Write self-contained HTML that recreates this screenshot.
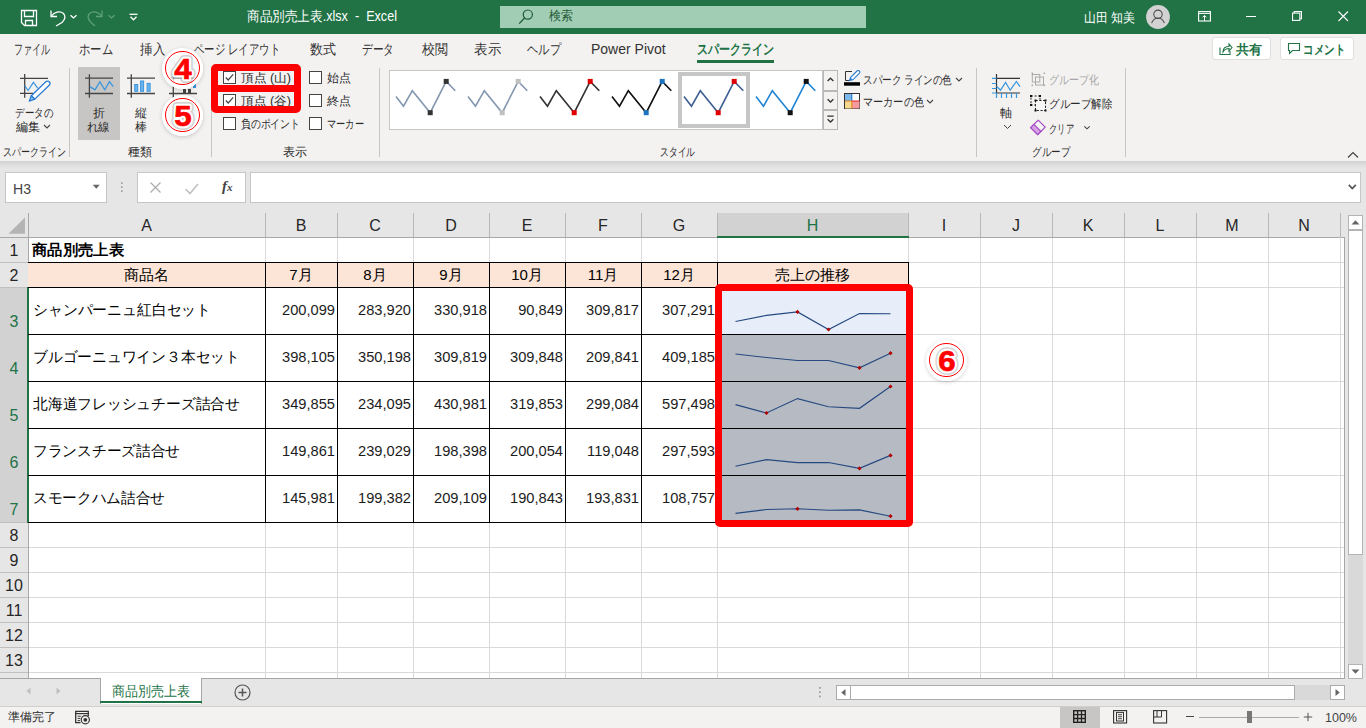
<!DOCTYPE html>
<html><head><meta charset="utf-8">
<style>
html,body{margin:0;padding:0;}
body{width:1366px;height:728px;overflow:hidden;position:relative;background:#e6e6e6;font-family:"Liberation Sans", sans-serif;}
.t{position:absolute;white-space:pre;}
</style></head><body>
<div style="position:absolute;left:0px;top:0px;width:1366px;height:34px;background:#217346"></div>
<svg style="position:absolute;left:20px;top:9px;" width="20" height="20" viewBox="0 0 20 20"><path d="M1.5 1.5H16.5V16.5H4.5L1.5 13.5Z" fill="none" stroke="#fff" stroke-width="1.3"/>
<path d="M4.5 1.5V7.5H13.5V1.5" fill="none" stroke="#fff" stroke-width="1.3"/>
<path d="M5.5 16.5V11.5H12.5V16.5" fill="none" stroke="#fff" stroke-width="1.3"/></svg>
<svg style="position:absolute;left:48px;top:9px;" width="32" height="20" viewBox="0 0 32 20"><path d="M3 1.5V7.5H9" fill="none" stroke="#fff" stroke-width="1.3"/>
<path d="M3.5 7C6 3 12 1.5 15.5 4.5C18.5 8 16.5 11 14 13.5L8 17" fill="none" stroke="#fff" stroke-width="1.3"/>
<path d="M22.5 6.3L25.5 9L28.5 6.3" fill="none" stroke="#fff" stroke-width="1.3"/></svg>
<svg style="position:absolute;left:87px;top:9px;" width="32" height="20" viewBox="0 0 32 20"><path d="M15 1.5V7.5H9" fill="none" stroke="#5f9e7b" stroke-width="1.3"/>
<path d="M14.5 7C12 3 6 1.5 2.5 4.5C-0.5 8 1.5 11 4 13.5L8 17" fill="none" stroke="#5f9e7b" stroke-width="1.3"/>
<path d="M21.5 6.3L24.5 9L27.5 6.3" fill="none" stroke="#5f9e7b" stroke-width="1.3"/></svg>
<svg style="position:absolute;left:128px;top:12px;" width="12" height="12" viewBox="0 0 12 12"><path d="M1.5 2.3H9.5" stroke="#fff" stroke-width="1.3"/><path d="M2.5 4.8L5.5 7.8L8.5 4.8" fill="none" stroke="#fff" stroke-width="1.3"/></svg>
<div class="t" style="left:247px;transform-origin:0 50%;top:7.00px;font-size:14px;line-height:18px;color:#ffffff;font-weight:normal;transform:scaleX(0.9011);">商品別売上表.xlsx  -  Excel</div>
<div style="position:absolute;left:500px;top:6px;width:366px;height:22px;background:#a0cdb3"></div>
<svg style="position:absolute;left:516px;top:9px;" width="20" height="18" viewBox="0 0 20 18"><circle cx="11.8" cy="5.6" r="4.6" fill="none" stroke="#1f5a37" stroke-width="1.2"/><path d="M8.6 9L3.2 14.6" stroke="#1f5a37" stroke-width="1.3"/></svg>
<div class="t" style="left:549px;transform-origin:0 50%;top:7.30px;font-size:13px;line-height:17px;color:#1f5a37;font-weight:normal;transform:scaleX(0.9231);">検索</div>
<div class="t" style="left:1084px;transform-origin:0 50%;top:8.50px;font-size:13px;line-height:17px;color:#ffffff;font-weight:normal;transform:scaleX(0.9169);">山田 知美</div>
<svg style="position:absolute;left:1146px;top:5px;" width="24" height="24" viewBox="0 0 24 24"><circle cx="12" cy="12" r="11.9" fill="#d2d2d2"/><circle cx="12" cy="9.3" r="4.2" fill="none" stroke="#4a4a4a" stroke-width="1.05"/><path d="M5.6 18.2C7 14.2 9.5 12.9 12 12.9S17 14.2 18.4 18.2" fill="none" stroke="#4a4a4a" stroke-width="1.05"/></svg>
<svg style="position:absolute;left:1198px;top:11px;" width="14" height="11" viewBox="0 0 14 11"><rect x="0.6" y="0.6" width="11.8" height="9.4" fill="none" stroke="#fff" stroke-width="1.1"/><path d="M0.6 2.4H12.4" stroke="#fff" stroke-width="1"/><path d="M6.5 10V4.4M4.6 6.3L6.5 4.4L8.4 6.3" fill="none" stroke="#fff" stroke-width="1"/></svg>
<div style="position:absolute;left:1246px;top:16px;width:10px;height:1px;background:#fff"></div>
<svg style="position:absolute;left:1292px;top:11px;" width="11" height="11" viewBox="0 0 11 11"><rect x="0.55" y="2.1" width="7.3" height="7.3" fill="none" stroke="#fff" stroke-width="1.1"/><path d="M2.2 2.1V0.55H9.45V7.8H7.85" fill="none" stroke="#fff" stroke-width="1.1"/></svg>
<svg style="position:absolute;left:1338px;top:11px;" width="11" height="11" viewBox="0 0 11 11"><path d="M0.5 0.5L10 10M10 0.5L0.5 10" stroke="#fff" stroke-width="1.1"/></svg>
<div style="position:absolute;left:0px;top:34px;width:1366px;height:127px;background:#f3f2f1"></div>
<div style="position:absolute;left:0px;top:161px;width:1366px;height:7px;background:linear-gradient(#d2d2d2,#e6e6e6)"></div>
<div class="t" style="left:14px;transform-origin:0 50%;top:40.00px;font-size:14px;line-height:18px;color:#333333;font-weight:normal;transform:scaleX(0.6429);">ファイル</div>
<div class="t" style="left:79px;transform-origin:0 50%;top:40.00px;font-size:14px;line-height:18px;color:#333333;font-weight:normal;transform:scaleX(0.8095);">ホーム</div>
<div class="t" style="left:140px;transform-origin:0 50%;top:40.00px;font-size:14px;line-height:18px;color:#333333;font-weight:normal;transform:scaleX(0.8929);">挿入</div>
<div class="t" style="left:194px;transform-origin:0 50%;top:40.00px;font-size:14px;line-height:18px;color:#333333;font-weight:normal;transform:scaleX(0.7421);">ページ レイアウト</div>
<div class="t" style="left:310px;transform-origin:0 50%;top:40.00px;font-size:14px;line-height:18px;color:#333333;font-weight:normal;transform:scaleX(0.9286);">数式</div>
<div class="t" style="left:362px;transform-origin:0 50%;top:40.00px;font-size:14px;line-height:18px;color:#333333;font-weight:normal;transform:scaleX(0.7619);">データ</div>
<div class="t" style="left:422px;transform-origin:0 50%;top:40.00px;font-size:14px;line-height:18px;color:#333333;font-weight:normal;transform:scaleX(0.9286);">校閲</div>
<div class="t" style="left:474px;transform-origin:0 50%;top:40.00px;font-size:14px;line-height:18px;color:#333333;font-weight:normal;transform:scaleX(0.9643);">表示</div>
<div class="t" style="left:527px;transform-origin:0 50%;top:40.00px;font-size:14px;line-height:18px;color:#333333;font-weight:normal;transform:scaleX(0.8095);">ヘルプ</div>
<div class="t" style="left:591px;transform-origin:0 50%;top:40.00px;font-size:14px;line-height:18px;color:#333333;font-weight:normal;">Power Pivot</div>
<div class="t" style="left:697px;transform-origin:0 50%;top:40.00px;font-size:14px;line-height:18px;color:#217346;font-weight:bold;transform:scaleX(0.7857);">スパークライン</div>
<div style="position:absolute;left:697px;top:60px;width:77px;height:3px;background:#217346"></div>
<div style="position:absolute;left:1212px;top:37px;width:59px;height:23px;background:#fff;border:1px solid #e1dfdd;box-sizing:border-box;border-radius:3px"></div>
<svg style="position:absolute;left:1219px;top:42px;" width="14" height="14" viewBox="0 0 14 14"><path d="M1 5.5V12.5H11V9" fill="none" stroke="#217346" stroke-width="1.1"/><path d="M4 10C4 6 6.5 4.5 10 4.5V2L13 5.5L10 9V6.5C7 6.5 5.5 7.5 4 10Z" fill="none" stroke="#217346" stroke-width="1.1"/></svg>
<div class="t" style="left:1236px;transform-origin:0 50%;top:40.50px;font-size:13px;line-height:17px;color:#217346;font-weight:bold;">共有</div>
<div style="position:absolute;left:1280px;top:37px;width:74px;height:23px;background:#fff;border:1px solid #e1dfdd;box-sizing:border-box;border-radius:3px"></div>
<svg style="position:absolute;left:1287px;top:42px;" width="14" height="14" viewBox="0 0 14 14"><path d="M1.5 1.5H12.5V8.5H5.5L2.5 11.5V8.5H1.5Z" fill="none" stroke="#217346" stroke-width="1.1"/></svg>
<div class="t" style="left:1303px;transform-origin:0 50%;top:40.50px;font-size:13px;line-height:17px;color:#217346;font-weight:bold;transform:scaleX(0.8077);">コメント</div>
<div style="position:absolute;left:69px;top:68px;width:1px;height:89px;background:#c8c6c4"></div>
<div style="position:absolute;left:211px;top:68px;width:1px;height:89px;background:#c8c6c4"></div>
<div style="position:absolute;left:379px;top:68px;width:1px;height:89px;background:#c8c6c4"></div>
<div style="position:absolute;left:976px;top:68px;width:1px;height:89px;background:#c8c6c4"></div>
<div style="position:absolute;left:1125px;top:68px;width:1px;height:89px;background:#c8c6c4"></div>
<div class="t" style="left:3px;transform-origin:0 50%;top:144.00px;font-size:12px;line-height:16px;color:#2b2b2b;font-weight:normal;transform:scaleX(0.7500);">スパークライン</div>
<div class="t" style="left:128px;transform-origin:0 50%;top:144.00px;font-size:12px;line-height:16px;color:#2b2b2b;font-weight:normal;">種類</div>
<div class="t" style="left:283px;transform-origin:0 50%;top:144.00px;font-size:12px;line-height:16px;color:#2b2b2b;font-weight:normal;">表示</div>
<div class="t" style="left:660px;transform-origin:0 50%;top:144.00px;font-size:12px;line-height:16px;color:#2b2b2b;font-weight:normal;transform:scaleX(0.7292);">スタイル</div>
<div class="t" style="left:1032px;transform-origin:0 50%;top:144.00px;font-size:12px;line-height:16px;color:#2b2b2b;font-weight:normal;transform:scaleX(0.7917);">グループ</div>
<svg style="position:absolute;left:1346px;top:150px;" width="14" height="10" viewBox="0 0 14 10"><path d="M2 7.5L7 2.5L12 7.5" fill="none" stroke="#444" stroke-width="1.2"/></svg>
<svg style="position:absolute;left:18px;top:72px;" width="34" height="32" viewBox="0 0 34 32"><path d="M2 6.3H30M2 21.4H15M6.7 2.1V25.7" stroke="#444" stroke-width="1.3" fill="none"/>
<path d="M6.7 13.7L10.1 18.5L15.4 10.3L19.7 16.1" stroke="#3a96dd" stroke-width="1.2" fill="none"/>
<path d="M13.3 23.8L27.8 9.8A2.4 2.4 0 0 1 31.2 13.2L16.7 27.2Z" fill="#fff" stroke="#2b7cd3" stroke-width="1.3"/>
<path d="M13.3 23.8L11.3 29.2L16.7 27.2Z" fill="#9cc9f0" stroke="#2b7cd3" stroke-width="1.3" stroke-linejoin="round"/></svg>
<div class="t" style="left:15px;transform-origin:0 50%;top:105.00px;font-size:12px;line-height:16px;color:#2b2b2b;font-weight:normal;transform:scaleX(0.7917);">データの</div>
<div class="t" style="left:16px;transform-origin:0 50%;top:119.00px;font-size:12px;line-height:16px;color:#2b2b2b;font-weight:normal;">編集</div>
<svg style="position:absolute;left:43px;top:124px;" width="8" height="6" viewBox="0 0 8 6"><path d="M1 1L4 4L7 1" fill="none" stroke="#444" stroke-width="1.1"/></svg>
<div style="position:absolute;left:78px;top:67px;width:42px;height:73px;background:#c8c6c4"></div>
<svg style="position:absolute;left:83px;top:72px;" width="34" height="28" viewBox="0 0 34 28"><path d="M2 6.2H30M2 21.5H30M6.4 2.2V25.8" stroke="#444" stroke-width="1.3" fill="none"/>
<path d="M6.9 14.6L12 17.8L16.9 9.7L21.7 17.8L26.5 9.7L30.2 14.6" stroke="#3a96dd" stroke-width="1.3" fill="none"/></svg>
<div class="t" style="left:93px;transform-origin:0 50%;top:105.00px;font-size:12px;line-height:16px;color:#2b2b2b;font-weight:normal;">折</div>
<div class="t" style="left:87px;transform-origin:0 50%;top:119.00px;font-size:12px;line-height:16px;color:#2b2b2b;font-weight:normal;transform:scaleX(0.9583);">れ線</div>
<svg style="position:absolute;left:125px;top:72px;" width="34" height="28" viewBox="0 0 34 28"><path d="M2 6.2H30M2 21.5H30M6.3 2.2V25.8" stroke="#444" stroke-width="1.3" fill="none"/>
<rect x="9.7" y="12.5" width="3" height="6.8" fill="#6cb4ec" stroke="#3a96dd" stroke-width="1"/>
<rect x="15.6" y="9" width="3" height="10.3" fill="#6cb4ec" stroke="#3a96dd" stroke-width="1"/>
<rect x="22.1" y="11.4" width="3" height="7.9" fill="#6cb4ec" stroke="#3a96dd" stroke-width="1"/></svg>
<div class="t" style="left:135px;transform-origin:0 50%;top:105.00px;font-size:12px;line-height:16px;color:#2b2b2b;font-weight:normal;">縦</div>
<div class="t" style="left:135px;transform-origin:0 50%;top:119.00px;font-size:12px;line-height:16px;color:#2b2b2b;font-weight:normal;">棒</div>
<svg style="position:absolute;left:167px;top:72px;" width="34" height="28" viewBox="0 0 34 28"><path d="M2 6.2H30M2 21.5H30M6.3 2.2V25.8" stroke="#444" stroke-width="1.3" fill="none"/>
<rect x="16" y="17" width="3" height="4" fill="#444"/><rect x="21" y="17" width="3" height="4" fill="#444"/><rect x="26" y="11" width="3" height="5" fill="#3a96dd"/></svg>
<svg style="position:absolute;left:223px;top:71px;" width="13" height="13" viewBox="0 0 13 13"><rect x="0.5" y="0.5" width="12" height="12" fill="#fff" stroke="#444" stroke-width="1"/><path d="M2.8 6.5L5.2 9L10.2 3.3" fill="none" stroke="#444" stroke-width="1.2"/></svg>
<svg style="position:absolute;left:223px;top:94px;" width="13" height="13" viewBox="0 0 13 13"><rect x="0.5" y="0.5" width="12" height="12" fill="#fff" stroke="#444" stroke-width="1"/><path d="M2.8 6.5L5.2 9L10.2 3.3" fill="none" stroke="#444" stroke-width="1.2"/></svg>
<svg style="position:absolute;left:223px;top:117px;" width="13" height="13" viewBox="0 0 13 13"><rect x="0.5" y="0.5" width="12" height="12" fill="#fff" stroke="#444" stroke-width="1"/></svg>
<svg style="position:absolute;left:309px;top:71px;" width="13" height="13" viewBox="0 0 13 13"><rect x="0.5" y="0.5" width="12" height="12" fill="#fff" stroke="#444" stroke-width="1"/></svg>
<svg style="position:absolute;left:309px;top:94px;" width="13" height="13" viewBox="0 0 13 13"><rect x="0.5" y="0.5" width="12" height="12" fill="#fff" stroke="#444" stroke-width="1"/></svg>
<svg style="position:absolute;left:309px;top:117px;" width="13" height="13" viewBox="0 0 13 13"><rect x="0.5" y="0.5" width="12" height="12" fill="#fff" stroke="#444" stroke-width="1"/></svg>
<div class="t" style="left:241px;transform-origin:0 50%;top:70.00px;font-size:12px;line-height:16px;color:#2b2b2b;font-weight:normal;transform:scaleX(1.0565);">頂点 (山)</div>
<div class="t" style="left:241px;transform-origin:0 50%;top:93.00px;font-size:12px;line-height:16px;color:#2b2b2b;font-weight:normal;transform:scaleX(1.0565);">頂点 (谷)</div>
<div class="t" style="left:241px;transform-origin:0 50%;top:116.00px;font-size:12px;line-height:16px;color:#2b2b2b;font-weight:normal;transform:scaleX(0.8194);">負のポイント</div>
<div class="t" style="left:327px;transform-origin:0 50%;top:70.00px;font-size:12px;line-height:16px;color:#2b2b2b;font-weight:normal;">始点</div>
<div class="t" style="left:327px;transform-origin:0 50%;top:93.00px;font-size:12px;line-height:16px;color:#2b2b2b;font-weight:normal;">終点</div>
<div class="t" style="left:327px;transform-origin:0 50%;top:116.00px;font-size:12px;line-height:16px;color:#2b2b2b;font-weight:normal;transform:scaleX(0.7708);">マーカー</div>
<div style="position:absolute;left:389px;top:70px;width:434px;height:60px;background:#fff;border:1px solid #c6c6c6;box-sizing:border-box"></div>
<svg style="position:absolute;left:396px;top:81px;overflow:visible" width="62" height="36" viewBox="0 0 62 36"><polyline points="0.0,15.4 7.5,25.2 16.3,9.7 34.2,31.7 50.2,0.4 59.3,9.7" fill="none" stroke="#8497b0" stroke-width="1.6"/><rect x="31.7" y="29.2" width="5" height="5" fill="#333333"/><rect x="47.7" y="-2.1" width="5" height="5" fill="#333333"/></svg>
<svg style="position:absolute;left:468px;top:81px;overflow:visible" width="62" height="36" viewBox="0 0 62 36"><polyline points="0.0,15.4 7.5,25.2 16.3,9.7 34.2,31.7 50.2,0.4 59.3,9.7" fill="none" stroke="#8497b0" stroke-width="1.6"/><rect x="31.7" y="29.2" width="5" height="5" fill="#c0c0c0"/><rect x="47.7" y="-2.1" width="5" height="5" fill="#c0c0c0"/></svg>
<svg style="position:absolute;left:540px;top:81px;overflow:visible" width="62" height="36" viewBox="0 0 62 36"><polyline points="0.0,15.4 7.5,25.2 16.3,9.7 34.2,31.7 50.2,0.4 59.3,9.7" fill="none" stroke="#333333" stroke-width="1.6"/><rect x="31.7" y="29.2" width="5" height="5" fill="#e00000"/><rect x="47.7" y="-2.1" width="5" height="5" fill="#e00000"/></svg>
<svg style="position:absolute;left:612px;top:81px;overflow:visible" width="62" height="36" viewBox="0 0 62 36"><polyline points="0.0,15.4 7.5,25.2 16.3,9.7 34.2,31.7 50.2,0.4 59.3,9.7" fill="none" stroke="#111111" stroke-width="1.6"/><rect x="31.7" y="29.2" width="5" height="5" fill="#1e73be"/><rect x="47.7" y="-2.1" width="5" height="5" fill="#1e73be"/></svg>
<svg style="position:absolute;left:684px;top:81px;overflow:visible" width="62" height="36" viewBox="0 0 62 36"><polyline points="0.0,15.4 7.5,25.2 16.3,9.7 34.2,31.7 50.2,0.4 59.3,9.7" fill="none" stroke="#3f5f93" stroke-width="1.6"/><rect x="31.7" y="29.2" width="5" height="5" fill="#e00000"/><rect x="47.7" y="-2.1" width="5" height="5" fill="#e00000"/></svg>
<svg style="position:absolute;left:756px;top:81px;overflow:visible" width="62" height="36" viewBox="0 0 62 36"><polyline points="0.0,15.4 7.5,25.2 16.3,9.7 34.2,31.7 50.2,0.4 59.3,9.7" fill="none" stroke="#2387d6" stroke-width="1.6"/><rect x="31.7" y="29.2" width="5" height="5" fill="#111111"/><rect x="47.7" y="-2.1" width="5" height="5" fill="#111111"/></svg>
<div style="position:absolute;left:678px;top:72px;width:72px;height:56px;border:4px solid #c6c6c6;box-sizing:border-box"></div>
<div style="position:absolute;left:823px;top:70px;width:15px;height:21px;background:#f3f2f1;border:1px solid #b8b8b8;box-sizing:border-box"></div>
<div style="position:absolute;left:823px;top:91px;width:15px;height:19px;background:#f3f2f1;border:1px solid #b8b8b8;box-sizing:border-box"></div>
<div style="position:absolute;left:823px;top:110px;width:15px;height:20px;background:#f3f2f1;border:1px solid #b8b8b8;box-sizing:border-box"></div>
<svg style="position:absolute;left:823px;top:70px;" width="15" height="60" viewBox="0 0 15 60"><path d="M4.6 11L7.5 8.2L10.4 11" fill="none" stroke="#333" stroke-width="1.3"/>
<path d="M4.6 29.2L7.5 32L10.4 29.2" fill="none" stroke="#333" stroke-width="1.3"/>
<path d="M4.3 46.2H10.7M4.6 49.2L7.5 52L10.4 49.2" fill="none" stroke="#333" stroke-width="1.3"/></svg>
<svg style="position:absolute;left:844px;top:70px;" width="17" height="17" viewBox="0 0 17 17"><path d="M8 1.5H1.5V10.5H5" fill="none" stroke="#333" stroke-width="1"/>
<path d="M5.5 10.5L6.5 7.5L13 1C13.7 0.3 14.7 0.3 15.3 1C16 1.7 16 2.6 15.3 3.3L8.8 9.8Z" fill="#fff" stroke="#2b7cd3" stroke-width="1.1"/>
<path d="M5.5 10.5L6.5 7.5L8.8 9.8Z" fill="#2b7cd3"/>
<rect x="0" y="12.2" width="16" height="3.5" fill="#000"/></svg>
<div class="t" style="left:863px;transform-origin:0 50%;top:72.00px;font-size:12px;line-height:16px;color:#2b2b2b;font-weight:normal;transform:scaleX(0.7993);">スパーク ラインの色</div>
<svg style="position:absolute;left:955px;top:77px;" width="8" height="6" viewBox="0 0 8 6"><path d="M1 1L4 4L7 1" fill="none" stroke="#444" stroke-width="1.1"/></svg>
<svg style="position:absolute;left:844px;top:93px;" width="17" height="17" viewBox="0 0 17 17"><rect x="0.5" y="0.5" width="15" height="15" fill="#fff" stroke="#333" stroke-width="1"/>
<rect x="1" y="1" width="7" height="7" fill="#7ab7ea"/><rect x="8" y="8" width="7.5" height="7.5" fill="#f4999c"/><rect x="1" y="8" width="7" height="7.5" fill="#f6d98f"/>
<path d="M7.8 1V8" stroke="#1a73c8" stroke-width="1"/><path d="M1 8H8" stroke="#e87d0d" stroke-width="1"/><path d="M8 8H15.5" stroke="#e02020" stroke-width="1"/><path d="M7.8 8V15.5" stroke="#e87d0d" stroke-width="1"/></svg>
<div class="t" style="left:863px;transform-origin:0 50%;top:94.00px;font-size:12px;line-height:16px;color:#2b2b2b;font-weight:normal;transform:scaleX(0.8472);">マーカーの色</div>
<svg style="position:absolute;left:926px;top:99px;" width="8" height="6" viewBox="0 0 8 6"><path d="M1 1L4 4L7 1" fill="none" stroke="#444" stroke-width="1.1"/></svg>
<svg style="position:absolute;left:990px;top:72px;" width="32" height="28" viewBox="0 0 32 28"><path d="M6.5 2V21.3M6.5 6.4H30M6.5 21H30" fill="none" stroke="#333" stroke-width="1.2"/>
<path d="M2 6.4H6.5M2 11.5H6.5M2 16.5H6.5M2 21H6.5M6.5 21V26M11.5 21V26M16.5 21V26M21.5 21V26M26.5 21V26" stroke="#3a96dd" stroke-width="1.2"/>
<path d="M6.5 14.1L10.5 18.2L15.6 10.5L20.2 18.2L26.4 9.5L30 14.6" fill="none" stroke="#3a96dd" stroke-width="1.2"/></svg>
<div class="t" style="left:1000px;transform-origin:0 50%;top:104.50px;font-size:12px;line-height:16px;color:#2b2b2b;font-weight:normal;">軸</div>
<svg style="position:absolute;left:1003px;top:124px;" width="9" height="6" viewBox="0 0 9 6"><path d="M1 1L4.5 4.5L8 1" fill="none" stroke="#444" stroke-width="1"/></svg>
<svg style="position:absolute;left:1030px;top:71px;" width="17" height="17" viewBox="0 0 17 17"><rect x="1.5" y="1.5" width="1.6" height="1.6" fill="#aaa"/><rect x="13.5" y="1.5" width="1.6" height="1.6" fill="#aaa"/><rect x="1.5" y="13.5" width="1.6" height="1.6" fill="#aaa"/><rect x="13.5" y="13.5" width="1.6" height="1.6" fill="#aaa"/>
<rect x="2.3" y="3.5" width="7.5" height="7.5" fill="none" stroke="#aaa" stroke-width="1"/><rect x="5.5" y="6" width="8" height="8" fill="none" stroke="#aaa" stroke-width="1"/></svg>
<div class="t" style="left:1049px;transform-origin:0 50%;top:72.00px;font-size:12px;line-height:16px;color:#a6a6a6;font-weight:normal;transform:scaleX(0.8333);">グループ化</div>
<svg style="position:absolute;left:1030px;top:95px;" width="17" height="17" viewBox="0 0 17 17"><rect x="1" y="1" width="9" height="9" fill="none" stroke="#222" stroke-width="1" stroke-dasharray="2 1.6"/>
<rect x="5.5" y="5.5" width="10" height="10" fill="#f8f8f8" stroke="#222" stroke-width="1" stroke-dasharray="2.2 1.6"/>
<rect x="0" y="0" width="2" height="2" fill="#111"/><rect x="9" y="0" width="2" height="2" fill="#111"/><rect x="0" y="9" width="2" height="2" fill="#111"/>
<rect x="4.5" y="4.5" width="2" height="2" fill="#111"/><rect x="14.5" y="4.5" width="2" height="2" fill="#111"/><rect x="4.5" y="14.5" width="2" height="2" fill="#111"/><rect x="14.5" y="14.5" width="2" height="2" fill="#111"/></svg>
<div class="t" style="left:1049px;transform-origin:0 50%;top:96.00px;font-size:12px;line-height:16px;color:#2b2b2b;font-weight:normal;transform:scaleX(0.8750);">グループ解除</div>
<svg style="position:absolute;left:1029px;top:118px;" width="18" height="18" viewBox="0 0 18 18"><path d="M1.7 9.6L9.2 2.1L16.2 9.1L8.7 16.6Z" fill="#f4f4f4" stroke="#a64dc4" stroke-width="1.3" stroke-linejoin="round"/>
<path d="M1.7 9.6L4.9 6.4L11.9 13.4L8.7 16.6Z" fill="#d7a2e6" stroke="#a64dc4" stroke-width="1.3" stroke-linejoin="round"/></svg>
<div class="t" style="left:1049px;transform-origin:0 50%;top:120.50px;font-size:12px;line-height:16px;color:#2b2b2b;font-weight:normal;transform:scaleX(0.6944);">クリア</div>
<svg style="position:absolute;left:1083px;top:125px;" width="9" height="6" viewBox="0 0 9 6"><path d="M1.3 1.3L4 3.8L6.7 1.3" fill="none" stroke="#444" stroke-width="1.1"/></svg>
<div style="position:absolute;left:5px;top:172px;width:102px;height:31px;background:#fff;border:1px solid #c6c6c6;box-sizing:border-box"></div>
<div class="t" style="left:13px;transform-origin:0 50%;top:180.00px;font-size:14px;line-height:18px;color:#444;font-weight:normal;transform:scaleX(1.0052);">H3</div>
<svg style="position:absolute;left:92px;top:184px;" width="10" height="6" viewBox="0 0 10 6"><path d="M0.8 0.8H7.8L4.3 4.8Z" fill="#666"/></svg>
<svg style="position:absolute;left:120px;top:181px;" width="4" height="14" viewBox="0 0 4 14"><rect x="1" y="1.3" width="1.6" height="1.6" fill="#999"/><rect x="1" y="5.3" width="1.6" height="1.6" fill="#999"/><rect x="1" y="9.3" width="1.6" height="1.6" fill="#999"/></svg>
<div style="position:absolute;left:137px;top:172px;width:109px;height:31px;background:#fff;border:1px solid #c6c6c6;box-sizing:border-box"></div>
<svg style="position:absolute;left:149px;top:181px;" width="14" height="14" viewBox="0 0 14 14"><path d="M1.5 1.5L11.5 11.5M11.5 1.5L1.5 11.5" stroke="#aaa" stroke-width="1.2"/></svg>
<svg style="position:absolute;left:184px;top:182px;" width="16" height="14" viewBox="0 0 16 14"><path d="M1.5 7L6 11.5L14 2" fill="none" stroke="#c0c0c0" stroke-width="1.6"/></svg>
<div class="t" style="left:222px;top:177px;font-family:'Liberation Serif',serif;font-style:italic;font-weight:bold;font-size:15px;line-height:18px;color:#444">f<span style="font-size:11px">x</span></div>
<div style="position:absolute;left:250px;top:172px;width:1111px;height:31px;background:#fff;border:1px solid #c6c6c6;box-sizing:border-box"></div>
<svg style="position:absolute;left:1347px;top:183px;" width="12" height="8" viewBox="0 0 12 8"><path d="M1.8 1.8L5.3 5.5L8.8 1.8" fill="none" stroke="#555" stroke-width="1.7"/></svg>
<div style="position:absolute;left:0px;top:213px;width:1345px;height:24px;background:#e6e6e6"></div>
<div style="position:absolute;left:29px;top:238px;width:1316px;height:440px;background:#fff"></div>
<div style="position:absolute;left:0px;top:238px;width:28px;height:440px;background:#e6e6e6"></div>
<div style="position:absolute;left:265px;top:213px;width:1px;height:24px;background:#b8b8b8"></div>
<div style="position:absolute;left:337px;top:213px;width:1px;height:24px;background:#b8b8b8"></div>
<div style="position:absolute;left:413px;top:213px;width:1px;height:24px;background:#b8b8b8"></div>
<div style="position:absolute;left:489px;top:213px;width:1px;height:24px;background:#b8b8b8"></div>
<div style="position:absolute;left:565px;top:213px;width:1px;height:24px;background:#b8b8b8"></div>
<div style="position:absolute;left:641px;top:213px;width:1px;height:24px;background:#b8b8b8"></div>
<div style="position:absolute;left:717px;top:213px;width:1px;height:24px;background:#b8b8b8"></div>
<div style="position:absolute;left:908px;top:213px;width:1px;height:24px;background:#b8b8b8"></div>
<div style="position:absolute;left:980px;top:213px;width:1px;height:24px;background:#b8b8b8"></div>
<div style="position:absolute;left:1052px;top:213px;width:1px;height:24px;background:#b8b8b8"></div>
<div style="position:absolute;left:1124px;top:213px;width:1px;height:24px;background:#b8b8b8"></div>
<div style="position:absolute;left:1196px;top:213px;width:1px;height:24px;background:#b8b8b8"></div>
<div style="position:absolute;left:1268px;top:213px;width:1px;height:24px;background:#b8b8b8"></div>
<div style="position:absolute;left:1340px;top:213px;width:1px;height:24px;background:#b8b8b8"></div>
<div style="position:absolute;left:0px;top:237px;width:1345px;height:1px;background:#a8a8a8"></div>
<div style="position:absolute;left:28px;top:213px;width:1px;height:465px;background:#a8a8a8"></div>
<svg style="position:absolute;left:8px;top:217px;" width="18" height="18" viewBox="0 0 18 18"><path d="M17 0.4V16.8H0.5Z" fill="#b4b4b4"/></svg>
<div style="position:absolute;left:718px;top:213px;width:190px;height:23px;background:#d2d2d2"></div>
<div style="position:absolute;left:717px;top:236px;width:192px;height:2px;background:#217346"></div>
<div class="t" style="left:28px;width:237px;top:216px;font-size:16px;line-height:20px;text-align:center;color:#262626">A</div>
<div class="t" style="left:265px;width:72px;top:216px;font-size:16px;line-height:20px;text-align:center;color:#262626">B</div>
<div class="t" style="left:337px;width:76px;top:216px;font-size:16px;line-height:20px;text-align:center;color:#262626">C</div>
<div class="t" style="left:413px;width:76px;top:216px;font-size:16px;line-height:20px;text-align:center;color:#262626">D</div>
<div class="t" style="left:489px;width:76px;top:216px;font-size:16px;line-height:20px;text-align:center;color:#262626">E</div>
<div class="t" style="left:565px;width:76px;top:216px;font-size:16px;line-height:20px;text-align:center;color:#262626">F</div>
<div class="t" style="left:641px;width:76px;top:216px;font-size:16px;line-height:20px;text-align:center;color:#262626">G</div>
<div class="t" style="left:717px;width:191px;top:216px;font-size:16px;line-height:20px;text-align:center;color:#217346">H</div>
<div class="t" style="left:908px;width:72px;top:216px;font-size:16px;line-height:20px;text-align:center;color:#262626">I</div>
<div class="t" style="left:980px;width:72px;top:216px;font-size:16px;line-height:20px;text-align:center;color:#262626">J</div>
<div class="t" style="left:1052px;width:72px;top:216px;font-size:16px;line-height:20px;text-align:center;color:#262626">K</div>
<div class="t" style="left:1124px;width:72px;top:216px;font-size:16px;line-height:20px;text-align:center;color:#262626">L</div>
<div class="t" style="left:1196px;width:72px;top:216px;font-size:16px;line-height:20px;text-align:center;color:#262626">M</div>
<div class="t" style="left:1268px;width:72px;top:216px;font-size:16px;line-height:20px;text-align:center;color:#262626">N</div>
<div style="position:absolute;left:0px;top:262px;width:28px;height:1px;background:#c0c0c0"></div>
<div style="position:absolute;left:0px;top:287px;width:28px;height:1px;background:#c0c0c0"></div>
<div style="position:absolute;left:0px;top:334px;width:28px;height:1px;background:#c0c0c0"></div>
<div style="position:absolute;left:0px;top:381px;width:28px;height:1px;background:#c0c0c0"></div>
<div style="position:absolute;left:0px;top:428px;width:28px;height:1px;background:#c0c0c0"></div>
<div style="position:absolute;left:0px;top:475px;width:28px;height:1px;background:#c0c0c0"></div>
<div style="position:absolute;left:0px;top:522px;width:28px;height:1px;background:#c0c0c0"></div>
<div style="position:absolute;left:0px;top:547px;width:28px;height:1px;background:#c0c0c0"></div>
<div style="position:absolute;left:0px;top:572px;width:28px;height:1px;background:#c0c0c0"></div>
<div style="position:absolute;left:0px;top:597px;width:28px;height:1px;background:#c0c0c0"></div>
<div style="position:absolute;left:0px;top:622px;width:28px;height:1px;background:#c0c0c0"></div>
<div style="position:absolute;left:0px;top:647px;width:28px;height:1px;background:#c0c0c0"></div>
<div style="position:absolute;left:0px;top:672px;width:28px;height:1px;background:#c0c0c0"></div>
<div style="position:absolute;left:0px;top:697px;width:28px;height:1px;background:#c0c0c0"></div>
<div style="position:absolute;left:0px;top:722px;width:28px;height:1px;background:#c0c0c0"></div>
<div style="position:absolute;left:0px;top:288px;width:27px;height:234px;background:#d2d2d2"></div>
<div style="position:absolute;left:27px;top:287px;width:2px;height:236px;background:#217346"></div>
<div class="t" style="left:0px;width:28px;top:241.3px;font-size:16px;line-height:20px;text-align:center;color:#262626">1</div>
<div class="t" style="left:0px;width:28px;top:266.3px;font-size:16px;line-height:20px;text-align:center;color:#262626">2</div>
<div class="t" style="left:0px;width:28px;top:311.5px;font-size:16px;line-height:20px;text-align:center;color:#217346">3</div>
<div class="t" style="left:0px;width:28px;top:358.5px;font-size:16px;line-height:20px;text-align:center;color:#217346">4</div>
<div class="t" style="left:0px;width:28px;top:405.5px;font-size:16px;line-height:20px;text-align:center;color:#217346">5</div>
<div class="t" style="left:0px;width:28px;top:452.5px;font-size:16px;line-height:20px;text-align:center;color:#217346">6</div>
<div class="t" style="left:0px;width:28px;top:499.5px;font-size:16px;line-height:20px;text-align:center;color:#217346">7</div>
<div class="t" style="left:0px;width:28px;top:526.3px;font-size:16px;line-height:20px;text-align:center;color:#262626">8</div>
<div class="t" style="left:0px;width:28px;top:551.3px;font-size:16px;line-height:20px;text-align:center;color:#262626">9</div>
<div class="t" style="left:0px;width:28px;top:576.3px;font-size:16px;line-height:20px;text-align:center;color:#262626">10</div>
<div class="t" style="left:0px;width:28px;top:601.3px;font-size:16px;line-height:20px;text-align:center;color:#262626">11</div>
<div class="t" style="left:0px;width:28px;top:626.3px;font-size:16px;line-height:20px;text-align:center;color:#262626">12</div>
<div class="t" style="left:0px;width:28px;top:651.3px;font-size:16px;line-height:20px;text-align:center;color:#262626">13</div>
<div class="t" style="left:0px;width:28px;top:676.3px;font-size:16px;line-height:20px;text-align:center;color:#262626">14</div>
<div style="position:absolute;left:265px;top:238px;width:1px;height:440px;background:#d9d9d9"></div>
<div style="position:absolute;left:337px;top:238px;width:1px;height:440px;background:#d9d9d9"></div>
<div style="position:absolute;left:413px;top:238px;width:1px;height:440px;background:#d9d9d9"></div>
<div style="position:absolute;left:489px;top:238px;width:1px;height:440px;background:#d9d9d9"></div>
<div style="position:absolute;left:565px;top:238px;width:1px;height:440px;background:#d9d9d9"></div>
<div style="position:absolute;left:641px;top:238px;width:1px;height:440px;background:#d9d9d9"></div>
<div style="position:absolute;left:717px;top:238px;width:1px;height:440px;background:#d9d9d9"></div>
<div style="position:absolute;left:908px;top:238px;width:1px;height:440px;background:#d9d9d9"></div>
<div style="position:absolute;left:980px;top:238px;width:1px;height:440px;background:#d9d9d9"></div>
<div style="position:absolute;left:1052px;top:238px;width:1px;height:440px;background:#d9d9d9"></div>
<div style="position:absolute;left:1124px;top:238px;width:1px;height:440px;background:#d9d9d9"></div>
<div style="position:absolute;left:1196px;top:238px;width:1px;height:440px;background:#d9d9d9"></div>
<div style="position:absolute;left:1268px;top:238px;width:1px;height:440px;background:#d9d9d9"></div>
<div style="position:absolute;left:1340px;top:238px;width:1px;height:440px;background:#d9d9d9"></div>
<div style="position:absolute;left:29px;top:262px;width:1316px;height:1px;background:#d9d9d9"></div>
<div style="position:absolute;left:29px;top:287px;width:1316px;height:1px;background:#d9d9d9"></div>
<div style="position:absolute;left:29px;top:334px;width:1316px;height:1px;background:#d9d9d9"></div>
<div style="position:absolute;left:29px;top:381px;width:1316px;height:1px;background:#d9d9d9"></div>
<div style="position:absolute;left:29px;top:428px;width:1316px;height:1px;background:#d9d9d9"></div>
<div style="position:absolute;left:29px;top:475px;width:1316px;height:1px;background:#d9d9d9"></div>
<div style="position:absolute;left:29px;top:522px;width:1316px;height:1px;background:#d9d9d9"></div>
<div style="position:absolute;left:29px;top:547px;width:1316px;height:1px;background:#d9d9d9"></div>
<div style="position:absolute;left:29px;top:572px;width:1316px;height:1px;background:#d9d9d9"></div>
<div style="position:absolute;left:29px;top:597px;width:1316px;height:1px;background:#d9d9d9"></div>
<div style="position:absolute;left:29px;top:622px;width:1316px;height:1px;background:#d9d9d9"></div>
<div style="position:absolute;left:29px;top:647px;width:1316px;height:1px;background:#d9d9d9"></div>
<div style="position:absolute;left:29px;top:672px;width:1316px;height:1px;background:#d9d9d9"></div>
<div style="position:absolute;left:28px;top:263px;width:880px;height:24px;background:#fce4d6"></div>
<div style="position:absolute;left:717px;top:287px;width:191px;height:47px;background:#e7eef9"></div>
<div style="position:absolute;left:717px;top:334px;width:191px;height:188px;background:#b5bac3"></div>
<div style="position:absolute;left:28px;top:262px;width:881px;height:1px;background:#000"></div>
<div style="position:absolute;left:28px;top:287px;width:881px;height:1px;background:#000"></div>
<div style="position:absolute;left:28px;top:334px;width:881px;height:1px;background:#000"></div>
<div style="position:absolute;left:28px;top:381px;width:881px;height:1px;background:#000"></div>
<div style="position:absolute;left:28px;top:428px;width:881px;height:1px;background:#000"></div>
<div style="position:absolute;left:28px;top:475px;width:881px;height:1px;background:#000"></div>
<div style="position:absolute;left:28px;top:522px;width:881px;height:1px;background:#000"></div>
<div style="position:absolute;left:265px;top:262px;width:1px;height:261px;background:#000"></div>
<div style="position:absolute;left:337px;top:262px;width:1px;height:261px;background:#000"></div>
<div style="position:absolute;left:413px;top:262px;width:1px;height:261px;background:#000"></div>
<div style="position:absolute;left:489px;top:262px;width:1px;height:261px;background:#000"></div>
<div style="position:absolute;left:565px;top:262px;width:1px;height:261px;background:#000"></div>
<div style="position:absolute;left:641px;top:262px;width:1px;height:261px;background:#000"></div>
<div style="position:absolute;left:717px;top:262px;width:1px;height:261px;background:#000"></div>
<div style="position:absolute;left:908px;top:262px;width:1px;height:261px;background:#000"></div>
<div class="t" style="left:32px;transform-origin:0 50%;top:240.00px;font-size:15px;line-height:20px;color:#000;font-weight:bold;transform:scaleX(1.0222);">商品別売上表</div>
<div class="t" style="left:28px;width:237px;top:265px;font-size:15px;line-height:20px;text-align:center;color:#000">商品名</div>
<div class="t" style="left:265px;width:72px;top:265px;font-size:15px;line-height:20px;text-align:center;color:#000">7月</div>
<div class="t" style="left:337px;width:76px;top:265px;font-size:15px;line-height:20px;text-align:center;color:#000">8月</div>
<div class="t" style="left:413px;width:76px;top:265px;font-size:15px;line-height:20px;text-align:center;color:#000">9月</div>
<div class="t" style="left:489px;width:76px;top:265px;font-size:15px;line-height:20px;text-align:center;color:#000">10月</div>
<div class="t" style="left:565px;width:76px;top:265px;font-size:15px;line-height:20px;text-align:center;color:#000">11月</div>
<div class="t" style="left:641px;width:76px;top:265px;font-size:15px;line-height:20px;text-align:center;color:#000">12月</div>
<div class="t" style="left:717px;width:191px;top:265px;font-size:15px;line-height:20px;text-align:center;color:#000">売上の推移</div>
<div class="t" style="left:33px;transform-origin:0 50%;top:301.00px;font-size:14.5px;line-height:19px;color:#000;font-weight:normal;transform:scaleX(0.9889);">シャンパーニュ紅白セット</div>
<div class="t" style="left:282.02px;transform-origin:0 50%;top:300.50px;font-size:14.67px;line-height:19px;color:#1c1c1c;font-weight:normal;">200,099</div>
<div class="t" style="left:358.02px;transform-origin:0 50%;top:300.50px;font-size:14.67px;line-height:19px;color:#1c1c1c;font-weight:normal;">283,920</div>
<div class="t" style="left:434.02px;transform-origin:0 50%;top:300.50px;font-size:14.67px;line-height:19px;color:#1c1c1c;font-weight:normal;">330,918</div>
<div class="t" style="left:518.17px;transform-origin:0 50%;top:300.50px;font-size:14.67px;line-height:19px;color:#1c1c1c;font-weight:normal;">90,849</div>
<div class="t" style="left:586.02px;transform-origin:0 50%;top:300.50px;font-size:14.67px;line-height:19px;color:#1c1c1c;font-weight:normal;">309,817</div>
<div class="t" style="left:662.02px;transform-origin:0 50%;top:300.50px;font-size:14.67px;line-height:19px;color:#1c1c1c;font-weight:normal;">307,291</div>
<svg style="position:absolute;left:717px;top:287px;" width="191" height="47" viewBox="0 0 191 47"><polyline points="18.5,34.5 49.5,28.4 80.5,24.9 111.5,42.5 142.5,26.5 173.5,26.7" fill="none" stroke="#264a80" stroke-width="1.15"/><path d="M78.4 24.9L80.5 22.8L82.6 24.9L80.5 27.0Z" fill="#b00000"/><path d="M109.4 42.5L111.5 40.4L113.6 42.5L111.5 44.6Z" fill="#b00000"/></svg>
<div class="t" style="left:33px;transform-origin:0 50%;top:348.00px;font-size:14.5px;line-height:19px;color:#000;font-weight:normal;transform:scaleX(0.9857);">ブルゴーニュワイン３本セット</div>
<div class="t" style="left:282.02px;transform-origin:0 50%;top:347.50px;font-size:14.67px;line-height:19px;color:#1c1c1c;font-weight:normal;">398,105</div>
<div class="t" style="left:358.02px;transform-origin:0 50%;top:347.50px;font-size:14.67px;line-height:19px;color:#1c1c1c;font-weight:normal;">350,198</div>
<div class="t" style="left:434.02px;transform-origin:0 50%;top:347.50px;font-size:14.67px;line-height:19px;color:#1c1c1c;font-weight:normal;">309,819</div>
<div class="t" style="left:510.02px;transform-origin:0 50%;top:347.50px;font-size:14.67px;line-height:19px;color:#1c1c1c;font-weight:normal;">309,848</div>
<div class="t" style="left:586.02px;transform-origin:0 50%;top:347.50px;font-size:14.67px;line-height:19px;color:#1c1c1c;font-weight:normal;">209,841</div>
<div class="t" style="left:662.02px;transform-origin:0 50%;top:347.50px;font-size:14.67px;line-height:19px;color:#1c1c1c;font-weight:normal;">409,185</div>
<svg style="position:absolute;left:717px;top:334px;" width="191" height="47" viewBox="0 0 191 47"><polyline points="18.5,20.0 49.5,23.5 80.5,26.5 111.5,26.5 142.5,33.8 173.5,19.2" fill="none" stroke="#264a80" stroke-width="1.15"/><path d="M171.4 19.2L173.5 17.1L175.6 19.2L173.5 21.3Z" fill="#b00000"/><path d="M140.4 33.8L142.5 31.7L144.6 33.8L142.5 35.9Z" fill="#b00000"/></svg>
<div class="t" style="left:33px;transform-origin:0 50%;top:395.00px;font-size:14.5px;line-height:19px;color:#000;font-weight:normal;transform:scaleX(0.9857);">北海道フレッシュチーズ詰合せ</div>
<div class="t" style="left:282.02px;transform-origin:0 50%;top:394.50px;font-size:14.67px;line-height:19px;color:#1c1c1c;font-weight:normal;">349,855</div>
<div class="t" style="left:358.02px;transform-origin:0 50%;top:394.50px;font-size:14.67px;line-height:19px;color:#1c1c1c;font-weight:normal;">234,095</div>
<div class="t" style="left:434.02px;transform-origin:0 50%;top:394.50px;font-size:14.67px;line-height:19px;color:#1c1c1c;font-weight:normal;">430,981</div>
<div class="t" style="left:510.02px;transform-origin:0 50%;top:394.50px;font-size:14.67px;line-height:19px;color:#1c1c1c;font-weight:normal;">319,853</div>
<div class="t" style="left:586.02px;transform-origin:0 50%;top:394.50px;font-size:14.67px;line-height:19px;color:#1c1c1c;font-weight:normal;">299,084</div>
<div class="t" style="left:662.02px;transform-origin:0 50%;top:394.50px;font-size:14.67px;line-height:19px;color:#1c1c1c;font-weight:normal;">597,498</div>
<svg style="position:absolute;left:717px;top:381px;" width="191" height="47" viewBox="0 0 191 47"><polyline points="18.5,23.6 49.5,32.0 80.5,17.6 111.5,25.7 142.5,27.3 173.5,5.5" fill="none" stroke="#264a80" stroke-width="1.15"/><path d="M171.4 5.5L173.5 3.4L175.6 5.5L173.5 7.6Z" fill="#b00000"/><path d="M47.4 32.0L49.5 29.9L51.6 32.0L49.5 34.1Z" fill="#b00000"/></svg>
<div class="t" style="left:33px;transform-origin:0 50%;top:442.00px;font-size:14.5px;line-height:19px;color:#000;font-weight:normal;transform:scaleX(0.9800);">フランスチーズ詰合せ</div>
<div class="t" style="left:282.02px;transform-origin:0 50%;top:441.50px;font-size:14.67px;line-height:19px;color:#1c1c1c;font-weight:normal;">149,861</div>
<div class="t" style="left:358.02px;transform-origin:0 50%;top:441.50px;font-size:14.67px;line-height:19px;color:#1c1c1c;font-weight:normal;">239,029</div>
<div class="t" style="left:434.02px;transform-origin:0 50%;top:441.50px;font-size:14.67px;line-height:19px;color:#1c1c1c;font-weight:normal;">198,398</div>
<div class="t" style="left:510.02px;transform-origin:0 50%;top:441.50px;font-size:14.67px;line-height:19px;color:#1c1c1c;font-weight:normal;">200,054</div>
<div class="t" style="left:587.11px;transform-origin:0 50%;top:441.50px;font-size:14.67px;line-height:19px;color:#1c1c1c;font-weight:normal;">119,048</div>
<div class="t" style="left:662.02px;transform-origin:0 50%;top:441.50px;font-size:14.67px;line-height:19px;color:#1c1c1c;font-weight:normal;">297,593</div>
<svg style="position:absolute;left:717px;top:428px;" width="191" height="47" viewBox="0 0 191 47"><polyline points="18.5,38.2 49.5,31.6 80.5,34.6 111.5,34.5 142.5,40.4 173.5,27.4" fill="none" stroke="#264a80" stroke-width="1.15"/><path d="M171.4 27.4L173.5 25.3L175.6 27.4L173.5 29.5Z" fill="#b00000"/><path d="M140.4 40.4L142.5 38.3L144.6 40.4L142.5 42.5Z" fill="#b00000"/></svg>
<div class="t" style="left:33px;transform-origin:0 50%;top:489.00px;font-size:14.5px;line-height:19px;color:#000;font-weight:normal;transform:scaleX(0.9778);">スモークハム詰合せ</div>
<div class="t" style="left:282.02px;transform-origin:0 50%;top:488.50px;font-size:14.67px;line-height:19px;color:#1c1c1c;font-weight:normal;">145,981</div>
<div class="t" style="left:358.02px;transform-origin:0 50%;top:488.50px;font-size:14.67px;line-height:19px;color:#1c1c1c;font-weight:normal;">199,382</div>
<div class="t" style="left:434.02px;transform-origin:0 50%;top:488.50px;font-size:14.67px;line-height:19px;color:#1c1c1c;font-weight:normal;">209,109</div>
<div class="t" style="left:510.02px;transform-origin:0 50%;top:488.50px;font-size:14.67px;line-height:19px;color:#1c1c1c;font-weight:normal;">190,843</div>
<div class="t" style="left:586.02px;transform-origin:0 50%;top:488.50px;font-size:14.67px;line-height:19px;color:#1c1c1c;font-weight:normal;">193,831</div>
<div class="t" style="left:662.02px;transform-origin:0 50%;top:488.50px;font-size:14.67px;line-height:19px;color:#1c1c1c;font-weight:normal;">108,757</div>
<svg style="position:absolute;left:717px;top:475px;" width="191" height="47" viewBox="0 0 191 47"><polyline points="18.5,38.4 49.5,34.5 80.5,33.8 111.5,35.2 142.5,34.9 173.5,41.2" fill="none" stroke="#264a80" stroke-width="1.15"/><path d="M78.4 33.8L80.5 31.7L82.6 33.8L80.5 35.9Z" fill="#b00000"/><path d="M171.4 41.2L173.5 39.1L175.6 41.2L173.5 43.3Z" fill="#b00000"/></svg>
<div style="position:absolute;left:715px;top:284px;width:198px;height:243px;border:7px solid #ff0000;border-radius:5px;box-sizing:border-box"></div>
<div style="position:absolute;left:211px;top:64px;width:90px;height:28px;border:7px solid #ff0000;border-radius:5px;box-sizing:border-box"></div>
<div style="position:absolute;left:211px;top:85px;width:90px;height:28px;border:7px solid #ff0000;border-radius:5px;box-sizing:border-box"></div>
<div style="position:absolute;left:162.0px;top:47.5px;width:41px;height:41px;border-radius:50%;background:radial-gradient(circle at 50% 50%, rgba(255,255,255,0.6) 0px, rgba(255,255,255,0.6) 14px, rgba(255,255,255,0.97) 15.5px, #fff 20.5px);box-shadow:0 1px 4px rgba(0,0,0,0.18)"></div>
<div style="position:absolute;left:165.25px;top:50.75px;width:34.5px;height:34.5px;border-radius:50%;border:1.4px solid #ff0000;box-sizing:border-box"></div>
<svg style="position:absolute;left:162.5px;top:48px;" width="40" height="40" viewBox="0 0 40 40"><text x="20" y="30.6" text-anchor="middle" font-family="Liberation Sans, sans-serif" font-weight="bold" font-size="29.5" transform="translate(20 0) scale(1.06 1) translate(-20 0)" fill="none" stroke="rgba(0,0,0,0.16)" stroke-width="8" stroke-linejoin="round">4</text><text x="20" y="30.6" text-anchor="middle" font-family="Liberation Sans, sans-serif" font-weight="bold" font-size="29.5" transform="translate(20 0) scale(1.06 1) translate(-20 0)" fill="none" stroke="#fff" stroke-width="4.5" stroke-linejoin="round">4</text><text x="20" y="30.6" text-anchor="middle" font-family="Liberation Sans, sans-serif" font-weight="bold" font-size="29.5" transform="translate(20 0) scale(1.06 1) translate(-20 0)" fill="#ff0000" stroke="#ff0000" stroke-width="0.7">4</text></svg>
<div style="position:absolute;left:162.0px;top:94.5px;width:41px;height:41px;border-radius:50%;background:radial-gradient(circle at 50% 50%, rgba(255,255,255,0.6) 0px, rgba(255,255,255,0.6) 14px, rgba(255,255,255,0.97) 15.5px, #fff 20.5px);box-shadow:0 1px 4px rgba(0,0,0,0.18)"></div>
<div style="position:absolute;left:165.25px;top:97.75px;width:34.5px;height:34.5px;border-radius:50%;border:1.4px solid #ff0000;box-sizing:border-box"></div>
<svg style="position:absolute;left:162.5px;top:95px;" width="40" height="40" viewBox="0 0 40 40"><text x="20" y="30.6" text-anchor="middle" font-family="Liberation Sans, sans-serif" font-weight="bold" font-size="29.5" transform="translate(20 0) scale(1.06 1) translate(-20 0)" fill="none" stroke="rgba(0,0,0,0.16)" stroke-width="8" stroke-linejoin="round">5</text><text x="20" y="30.6" text-anchor="middle" font-family="Liberation Sans, sans-serif" font-weight="bold" font-size="29.5" transform="translate(20 0) scale(1.06 1) translate(-20 0)" fill="none" stroke="#fff" stroke-width="4.5" stroke-linejoin="round">5</text><text x="20" y="30.6" text-anchor="middle" font-family="Liberation Sans, sans-serif" font-weight="bold" font-size="29.5" transform="translate(20 0) scale(1.06 1) translate(-20 0)" fill="#ff0000" stroke="#ff0000" stroke-width="0.7">5</text></svg>
<div style="position:absolute;left:926.0px;top:339.5px;width:41px;height:41px;border-radius:50%;background:radial-gradient(circle at 50% 50%, rgba(255,255,255,0.6) 0px, rgba(255,255,255,0.6) 14px, rgba(255,255,255,0.97) 15.5px, #fff 20.5px);box-shadow:0 1px 4px rgba(0,0,0,0.18)"></div>
<div style="position:absolute;left:929.25px;top:342.75px;width:34.5px;height:34.5px;border-radius:50%;border:1.4px solid #ff0000;box-sizing:border-box"></div>
<svg style="position:absolute;left:926.5px;top:340px;" width="40" height="40" viewBox="0 0 40 40"><text x="20" y="30.6" text-anchor="middle" font-family="Liberation Sans, sans-serif" font-weight="bold" font-size="29.5" transform="translate(20 0) scale(1.06 1) translate(-20 0)" fill="none" stroke="rgba(0,0,0,0.16)" stroke-width="8" stroke-linejoin="round">6</text><text x="20" y="30.6" text-anchor="middle" font-family="Liberation Sans, sans-serif" font-weight="bold" font-size="29.5" transform="translate(20 0) scale(1.06 1) translate(-20 0)" fill="none" stroke="#fff" stroke-width="4.5" stroke-linejoin="round">6</text><text x="20" y="30.6" text-anchor="middle" font-family="Liberation Sans, sans-serif" font-weight="bold" font-size="29.5" transform="translate(20 0) scale(1.06 1) translate(-20 0)" fill="#ff0000" stroke="#ff0000" stroke-width="0.7">6</text></svg>
<div style="position:absolute;left:1345px;top:213px;width:21px;height:465px;background:#e6e6e6"></div>
<div style="position:absolute;left:1340px;top:237px;width:1px;height:441px;background:#d9d9d9"></div>
<div style="position:absolute;left:1344px;top:237px;width:1px;height:442px;background:#a6a6a6"></div>
<div style="position:absolute;left:0px;top:678px;width:1345px;height:1px;background:#a6a6a6"></div>
<div style="position:absolute;left:1348px;top:215px;width:15px;height:15px;background:#fff;border:1px solid #b4b4b4;box-sizing:border-box"></div>
<svg style="position:absolute;left:1348px;top:215px;" width="15" height="15" viewBox="0 0 15 15"><path d="M3.5 9.5L7.5 5.3L11.5 9.5Z" fill="#666"/></svg>
<div style="position:absolute;left:1348px;top:230px;width:15px;height:434px;background:#d9d9d9"></div>
<div style="position:absolute;left:1348px;top:230px;width:15px;height:325px;background:#fff;border:1px solid #b4b4b4;box-sizing:border-box"></div>
<div style="position:absolute;left:1348px;top:664px;width:15px;height:15px;background:#fff;border:1px solid #b4b4b4;box-sizing:border-box"></div>
<svg style="position:absolute;left:1348px;top:664px;" width="15" height="15" viewBox="0 0 15 15"><path d="M3.5 5.5L7.5 9.7L11.5 5.5Z" fill="#666"/></svg>
<div style="position:absolute;left:0px;top:679px;width:1366px;height:27px;background:#e6e6e6"></div>
<svg style="position:absolute;left:25px;top:686px;" width="8" height="12" viewBox="0 0 8 12"><path d="M5.5 1.5L1.5 5L5.5 8.5Z" fill="#c0c0c0"/></svg>
<svg style="position:absolute;left:55px;top:686px;" width="8" height="12" viewBox="0 0 8 12"><path d="M1.5 1.5L5.5 5L1.5 8.5Z" fill="#c0c0c0"/></svg>
<div style="position:absolute;left:100px;top:678px;width:102px;height:26px;background:#fff;border-left:1px solid #a6a6a6;border-right:1px solid #a6a6a6;box-sizing:border-box"></div>
<div style="position:absolute;left:100px;top:701px;width:102px;height:2px;background:#217346"></div>
<div class="t" style="left:112px;transform-origin:0 50%;top:682.00px;font-size:14px;line-height:18px;color:#217346;font-weight:normal;transform:scaleX(0.9286);">商品別売上表</div>
<svg style="position:absolute;left:233px;top:683px;" width="19" height="19" viewBox="0 0 19 19"><circle cx="9.5" cy="9.5" r="7.5" fill="none" stroke="#555" stroke-width="1.2"/><path d="M9.5 5.5V13.5M5.5 9.5H13.5" stroke="#555" stroke-width="1.5"/></svg>
<svg style="position:absolute;left:818px;top:686px;" width="4" height="14" viewBox="0 0 4 14"><rect x="1" y="1" width="1.7" height="1.7" fill="#999"/><rect x="1" y="5.3" width="1.7" height="1.7" fill="#999"/><rect x="1" y="9.6" width="1.7" height="1.7" fill="#999"/></svg>
<div style="position:absolute;left:836px;top:685px;width:509px;height:15px;background:#d9d9d9"></div>
<div style="position:absolute;left:850px;top:685px;width:445px;height:15px;background:#fff;border:1px solid #ababab;box-sizing:border-box"></div>
<div style="position:absolute;left:836px;top:685px;width:15px;height:15px;background:#fff;border:1px solid #ababab;box-sizing:border-box"></div>
<svg style="position:absolute;left:836px;top:685px;" width="15" height="15" viewBox="0 0 15 15"><path d="M9.5 4L5.2 7.5L9.5 11Z" fill="#666"/></svg>
<div style="position:absolute;left:1330px;top:685px;width:15px;height:15px;background:#fff;border:1px solid #ababab;box-sizing:border-box"></div>
<svg style="position:absolute;left:1330px;top:685px;" width="15" height="15" viewBox="0 0 15 15"><path d="M5.5 4L9.8 7.5L5.5 11Z" fill="#666"/></svg>
<div style="position:absolute;left:0px;top:707px;width:1366px;height:21px;background:#f3f2f1"></div>
<div style="position:absolute;left:0px;top:706px;width:1366px;height:1px;background:#cfcfcf"></div>
<div class="t" style="left:8px;transform-origin:0 50%;top:709.00px;font-size:12px;line-height:16px;color:#2b2b2b;font-weight:normal;">準備完了</div>
<svg style="position:absolute;left:75px;top:710px;" width="16" height="15" viewBox="0 0 16 15"><path d="M13.3 6V1.3H0.7V12.6H5.5" fill="none" stroke="#333" stroke-width="1.3"/><path d="M0.7 3.6H13.3" stroke="#333" stroke-width="1.2"/><path d="M2.6 6.2H5.8M2.6 8.4H5.2M2.6 10.6H5" stroke="#333" stroke-width="1"/><circle cx="10.3" cy="9.8" r="4.1" fill="#f3f2f1" stroke="#333" stroke-width="1.2"/><circle cx="10.3" cy="9.8" r="1.9" fill="#333"/></svg>
<div style="position:absolute;left:1060px;top:707px;width:40px;height:21px;background:#c8c6c4"></div>
<svg style="position:absolute;left:1073px;top:710px;" width="15" height="15" viewBox="0 0 15 15"><rect x="0.7" y="0.7" width="11.6" height="11.6" fill="none" stroke="#222" stroke-width="1.4"/><path d="M4.6 0.7V12.3M8.5 0.7V12.3M0.7 4.6H12.3M0.7 8.5H12.3" stroke="#222" stroke-width="1.3"/></svg>
<svg style="position:absolute;left:1113px;top:710px;" width="15" height="15" viewBox="0 0 15 15"><rect x="0.6" y="0.6" width="13" height="12.4" fill="none" stroke="#333" stroke-width="1.1"/><rect x="3.5" y="2.4" width="7" height="8.6" fill="none" stroke="#333" stroke-width="1"/><path d="M5 4.7H9M5 6.7H9M5 8.7H9" stroke="#333" stroke-width="0.9"/></svg>
<svg style="position:absolute;left:1153px;top:710px;" width="15" height="15" viewBox="0 0 15 15"><rect x="0.6" y="0.6" width="13" height="12.4" fill="none" stroke="#333" stroke-width="1.1"/><path d="M0.6 7H8.5V0.6M4 0.6V7" fill="none" stroke="#333" stroke-width="1"/></svg>
<div style="position:absolute;left:1186px;top:716px;width:8px;height:1px;background:#444"></div>
<div style="position:absolute;left:1199px;top:717px;width:100px;height:1px;background:#aaa"></div>
<div style="position:absolute;left:1247px;top:711px;width:5px;height:12px;background:#777"></div>
<svg style="position:absolute;left:1303px;top:712px;" width="10" height="10" viewBox="0 0 10 10"><path d="M5 0.8V9.2M0.8 5H9.2" stroke="#444" stroke-width="0.9"/></svg>
<div class="t" style="left:1325px;transform-origin:0 50%;top:708.50px;font-size:13px;line-height:17px;color:#444;font-weight:normal;transform:scaleX(0.9624);">100%</div>
</body></html>
